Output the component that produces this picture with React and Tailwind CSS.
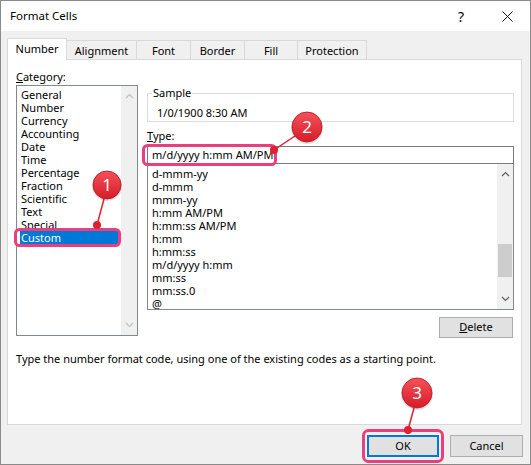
import React from "react";

const categories = ["General","Number","Currency","Accounting","Date","Time","Percentage","Fraction","Scientific","Text","Special","Custom"];
const types = ["d-mmm-yy","d-mmm","mmm-yy","h:mm AM/PM","h:mm:ss AM/PM","h:mm","h:mm:ss","m/d/yyyy h:mm","mm:ss","mm:ss.0","@"];

const tabs = [
  { label: "Number", cls: "w-[60px] h-[22px] border-l border-r border-t bg-white -mb-px relative z-10 pb-[2px]" },
  { label: "Alignment", cls: "w-[70px] h-[19px] border-t border-r" },
  { label: "Font", cls: "w-[54px] h-[19px] border-t border-r" },
  { label: "Border", cls: "w-[54px] h-[19px] border-t border-r" },
  { label: "Fill", cls: "w-[53px] h-[19px] border-t border-r" },
  { label: "Protection", cls: "w-[69px] h-[19px] border-t border-r" },
];

function Chevron({ up, color }) {
  return (
    <svg width="9" height="6" viewBox="0 0 9 6">
      <path d={up ? "M1 5 L4.5 1.5 L8 5" : "M1 1 L4.5 4.5 L8 1"} fill="none" stroke={color} strokeWidth="1.2" />
    </svg>
  );
}

function Badge({ cx, cy, r, n }) {
  return (
    <g>
      <circle cx={cx} cy={cy + 1} r={r + 1} fill="rgba(0,0,0,0.12)" />
      <circle cx={cx} cy={cy} r={r} fill="url(#redg)" stroke="#b5121d" strokeWidth="0.8" />
      <text x={cx} y={cy + 6} textAnchor="middle" fill="#ffffff" fontSize="17" fontFamily="Noto Sans, sans-serif">{n}</text>
    </g>
  );
}

export default function App() {
  return (
    <div className="relative w-[531px] h-[465px] font-['Noto_Sans',sans-serif] text-[11px] text-black">
      <div className="h-full border border-[#8a8a8a] bg-[#f0f0f0] flex flex-col">
        {/* Title bar */}
        <div className="h-[30px] bg-white flex items-center shrink-0">
          <span className="pl-[9px] text-[11.5px]">Format Cells</span>
          <div className="ml-auto w-[46px] h-full flex items-center justify-center text-[14px]">?</div>
          <div className="w-[46px] h-full flex items-center justify-center">
            <svg width="11" height="11" viewBox="0 0 11 11">
              <path d="M0.5 0.5 L10.5 10.5 M10.5 0.5 L0.5 10.5" stroke="#111" strokeWidth="1" />
            </svg>
          </div>
        </div>

        {/* Tabs */}
        <div className="flex items-end h-[21px] ml-[6px] mt-[7px] shrink-0">
          {tabs.map((t) => (
            <div key={t.label} className={`${t.cls} border-[#d9d9d9] flex justify-center items-center leading-[15px]`}>
              {t.label}
            </div>
          ))}
        </div>

        {/* Panel */}
        <div className="ml-[6px] w-[515px] h-[366px] bg-white border border-[#d9d9d9] flex flex-col shrink-0">
          <div className="flex pl-[8px] pt-[8px] gap-[9px]">
            {/* Category column */}
            <div className="w-[122px] flex flex-col">
              <div className="h-[17px] leading-[17px]"><span className="underline">C</span>ategory:</div>
              <div className="h-[251px] border border-[#828790] flex">
                <div className="flex-1 pl-[3px] pr-[1px] pt-[2px] flex flex-col">
                  {categories.map((c) => (
                    <div
                      key={c}
                      className={c === "Custom" ? "h-[13px] leading-[13px] pl-[1px] bg-[#0078d7] text-white" : "h-[13px] leading-[13px] pl-[1px]"}
                    >
                      {c}
                    </div>
                  ))}
                </div>
                <div className="w-[16px] bg-[#f0f0f0] flex flex-col justify-between items-center pt-[7px] pb-[7px]">
                  <Chevron up color="#bfbfbf" />
                  <Chevron color="#bfbfbf" />
                </div>
              </div>
            </div>

            {/* Right column */}
            <div className="w-[367px] flex flex-col">
              <fieldset className="mt-[17px] border border-[#dcdcdc] pl-[4px] pr-[4px]">
                <legend className="px-[1px] leading-[16px]">Sample</legend>
                <div className="mt-[4px] h-[16px] leading-[16px] pl-[5px]">1/0/1900 8:30 AM</div>
              </fieldset>
              <div className="mt-[6px] h-[16px] leading-[16px]"><span className="underline">T</span>ype:</div>
              <div className="mt-[2px] h-[18px] border border-[#7a7a7a] flex items-center pl-[4px]">
                <span>m/d/yyyy h:mm AM/PM</span>
                <span className="w-px h-[13px] bg-black ml-px" />
              </div>
              <div className="h-[146px] border border-t-0 border-[#828790] flex">
                <div className="flex-1 pl-[4px] pt-[3px] flex flex-col">
                  {types.map((t) => (
                    <div key={t} className="h-[13px] leading-[13px]">{t}</div>
                  ))}
                </div>
                <div className="w-[16px] bg-[#f0f0f0] flex flex-col">
                  <div className="h-[20px] flex items-center justify-center"><Chevron up color="#606060" /></div>
                  <div className="flex-1 flex flex-col px-[1px]">
                    <div className="h-[60px]" />
                    <div className="h-[33px] bg-[#cdcdcd]" />
                  </div>
                  <div className="h-[20px] flex items-center justify-center"><Chevron color="#606060" /></div>
                </div>
              </div>
              <div className="mt-[7px] flex justify-end pr-[1px]">
                <div className="w-[74px] h-[21px] bg-[#e1e1e1] border border-[#adadad] flex items-center justify-center">
                  <span><span className="underline">D</span>elete</span>
                </div>
              </div>
            </div>
          </div>
          <div className="mt-[13px] pl-[8px] h-[16px] leading-[16px]">
            Type the number format code, using one of the existing codes as a starting point.
          </div>
        </div>

        {/* Buttons */}
        <div className="mt-[10px] flex justify-end gap-[11px] pr-[7px]">
          <div className="w-[72px] h-[22px] bg-[#e1e1e1] border-2 border-[#0078d7] flex items-center justify-center">OK</div>
          <div className="w-[73px] h-[22px] bg-[#e1e1e1] border border-[#adadad] flex items-center justify-center">Cancel</div>
        </div>
      </div>

      {/* Annotations */}
      <svg className="absolute left-0 top-0 pointer-events-none" width="531" height="465" viewBox="0 0 531 465">
        <defs>
          <linearGradient id="redg" x1="0" y1="0" x2="0" y2="1">
            <stop offset="0" stopColor="#f4525a" />
            <stop offset="1" stopColor="#d61c29" />
          </linearGradient>
        </defs>
        <g fill="none" stroke="#ea3f7c" strokeWidth="3">
          <rect x="15.5" y="229.5" width="104" height="16" rx="4" />
          <rect x="143.5" y="145.5" width="132" height="19" rx="4" />
          <rect x="363.5" y="430.5" width="79" height="31" rx="5" />
        </g>
        <g stroke="#e0202e" strokeWidth="1.5">
          <line x1="104" y1="199" x2="97" y2="225" />
          <line x1="295" y1="136" x2="274" y2="150" />
          <line x1="414" y1="408" x2="408" y2="430" />
        </g>
        <g fill="#e0202e">
          <circle cx="97" cy="225" r="4" />
          <circle cx="274" cy="150" r="4" />
          <circle cx="408" cy="430" r="4" />
        </g>
        <Badge cx={107} cy={185} r={14} n="1" />
        <Badge cx={307} cy={127} r={15} n="2" />
        <Badge cx={417} cy={393} r={15} n="3" />
      </svg>
    </div>
  );
}
